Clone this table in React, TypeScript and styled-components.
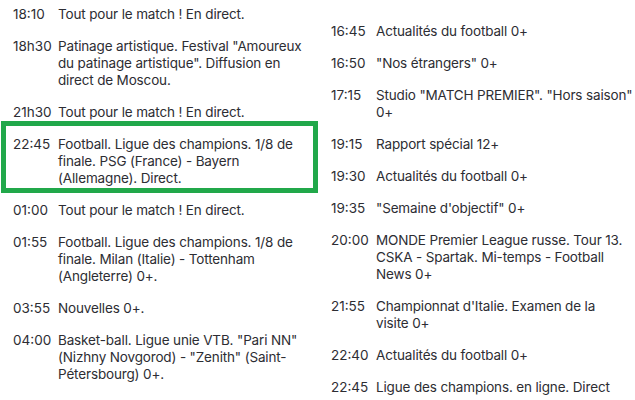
import React from 'react'
import styled, { createGlobalStyle } from 'styled-components'

type Broadcast = {
    time: string
    title: string
    live?: boolean
}

// line breaks follow the original listing
const leftList: Broadcast[] = [
    { time: '18:10', title: 'Tout pour le match ! En direct.' },
    { time: '18h30', title: 'Patinage artistique. Festival "Amoureux\ndu patinage artistique". Diffusion en\ndirect de Moscou.' },
    { time: '21h30', title: 'Tout pour le match ! En direct.' },
    { time: '22:45', title: 'Football. Ligue des champions. 1/8 de\nfinale. PSG (France) - Bayern\n(Allemagne). Direct.', live: true },
    { time: '01:00', title: 'Tout pour le match ! En direct.' },
    { time: '01:55', title: 'Football. Ligue des champions. 1/8 de\nfinale. Milan (Italie) - Tottenham\n(Angleterre) 0+.' },
    { time: '03:55', title: 'Nouvelles 0+.' },
    { time: '04:00', title: 'Basket-ball. Ligue unie VTB. "Pari NN"\n(Nizhny Novgorod) - "Zenith" (Saint-\nPétersbourg) 0+.' },
]

const rightList: Broadcast[] = [
    { time: '16:45', title: 'Actualités du football 0+' },
    { time: '16:50', title: '"Nos étrangers" 0+' },
    { time: '17:15', title: 'Studio "MATCH PREMIER". "Hors saison"\n0+' },
    { time: '19:15', title: 'Rapport spécial 12+' },
    { time: '19:30', title: 'Actualités du football 0+' },
    { time: '19:35', title: '"Semaine d\'objectif" 0+' },
    { time: '20:00', title: 'MONDE Premier League russe. Tour 13.\nCSKA - Spartak. Mi-temps - Football\nNews 0+' },
    { time: '21:55', title: 'Championnat d\'Italie. Examen de la\nvisite 0+' },
    { time: '22:40', title: 'Actualités du football 0+' },
    { time: '22:45', title: 'Ligue des champions. en ligne. Direct' },
]

const Schedule: React.FC<{ items: Broadcast[]; $shift: number }> = ({ items, $shift }) => (
    <Column $shift={$shift}>
        {items.map((item) => (
            <Row key={item.time + item.title} $live={item.live}>
                <Time>{item.time}</Time>
                <Title>{item.title}</Title>
            </Row>
        ))}
    </Column>
)

const App: React.FC = () => {
    return (
        <>
            <GlobalStyle />
            <Page>
                <Schedule items={leftList} $shift={-2} />
                <Schedule items={rightList} $shift={15} />
            </Page>
        </>
    )
}

const GlobalStyle = createGlobalStyle`
    html, body {
        margin: 0;
        background: #ffffff;
    }
    body {
        font-family: Inter, 'Noto Sans', sans-serif;
        color: #2d2d33;
        overflow: hidden;
    }
`

const Page = styled.div`
    display: grid;
    grid-template-columns: 318px 317px;
    width: 635px;
    height: 400px;
    overflow: hidden;
`

const Column = styled.ul<{ $shift: number }>`
    list-style: none;
    margin: ${p => p.$shift < 0 ? `${p.$shift}px` : 0} 0 0;
    padding: ${p => p.$shift > 0 ? `${p.$shift}px` : 0} 5px 0;
`

const Row = styled.li<{ $live?: boolean }>`
    position: relative;
    display: flex;
    padding: 7.5px 0 7.5px 8px;
    font-size: 13.5px;
    line-height: 17px;
    letter-spacing: -0.15px;
    &::after {
        content: '';
        display: ${p => p.$live ? 'block' : 'none'};
        position: absolute;
        top: -7px;
        bottom: 1px;
        left: -4px;
        right: -5px;
        border: 5px solid #21a84a;
        pointer-events: none;
    }
`

const Time = styled.span`
    flex: 0 0 45px;
    letter-spacing: 0;
`

const Title = styled.span`
    flex: 1;
    white-space: pre;
`

export default App
